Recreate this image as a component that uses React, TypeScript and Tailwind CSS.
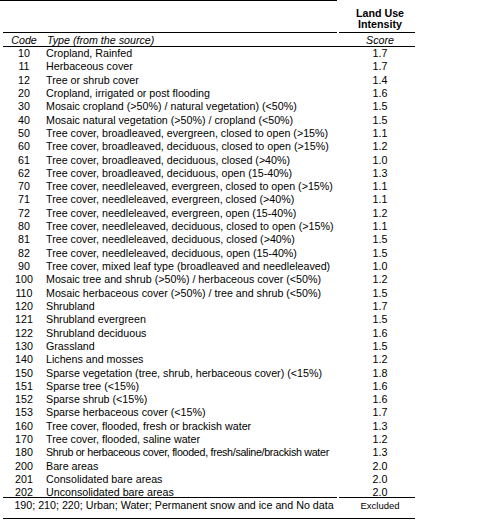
const rows: [string, string, string][] = [
  ["10", "Cropland, Rainfed", "1.7"],
  ["11", "Herbaceous cover", "1.7"],
  ["12", "Tree or shrub cover", "1.4"],
  ["20", "Cropland, irrigated or post flooding", "1.6"],
  ["30", "Mosaic cropland (>50%) / natural vegetation) (<50%)", "1.5"],
  ["40", "Mosaic natural vegetation (>50%) / cropland (<50%)", "1.5"],
  ["50", "Tree cover, broadleaved, evergreen, closed to open (>15%)", "1.1"],
  ["60", "Tree cover, broadleaved, deciduous, closed to open (>15%)", "1.2"],
  ["61", "Tree cover, broadleaved, deciduous, closed (>40%)", "1.0"],
  ["62", "Tree cover, broadleaved, deciduous, open (15-40%)", "1.3"],
  ["70", "Tree cover, needleleaved, evergreen, closed to open (>15%)", "1.1"],
  ["71", "Tree cover, needleleaved, evergreen, closed (>40%)", "1.1"],
  ["72", "Tree cover, needleleaved, evergreen, open (15-40%)", "1.2"],
  ["80", "Tree cover, needleleaved, deciduous, closed to open (>15%)", "1.1"],
  ["81", "Tree cover, needleleaved, deciduous, closed (>40%)", "1.5"],
  ["82", "Tree cover, needleleaved, deciduous, open (15-40%)", "1.5"],
  ["90", "Tree cover, mixed leaf type (broadleaved and needleleaved)", "1.0"],
  ["100", "Mosaic tree and shrub (>50%) / herbaceous cover (<50%)", "1.2"],
  ["110", "Mosaic herbaceous cover (>50%) / tree and shrub (<50%)", "1.5"],
  ["120", "Shrubland", "1.7"],
  ["121", "Shrubland evergreen", "1.5"],
  ["122", "Shrubland deciduous", "1.6"],
  ["130", "Grassland", "1.5"],
  ["140", "Lichens and mosses", "1.2"],
  ["150", "Sparse vegetation (tree, shrub, herbaceous cover) (<15%)", "1.8"],
  ["151", "Sparse tree (<15%)", "1.6"],
  ["152", "Sparse shrub (<15%)", "1.6"],
  ["153", "Sparse herbaceous cover (<15%)", "1.7"],
  ["160", "Tree cover, flooded, fresh or brackish water", "1.3"],
  ["170", "Tree cover, flooded, saline water", "1.2"],
  ["180", "Shrub or herbaceous cover, flooded, fresh/saline/brackish water", "1.3"],
  ["200", "Bare areas", "2.0"],
  ["201", "Consolidated bare areas", "2.0"],
  ["202", "Unconsolidated bare areas", "2.0"],
];

export default function App() {
  return (
    <div className="w-[490px] h-[520px] bg-white text-black text-[10.7px] font-['Liberation_Sans',Arial,sans-serif] overflow-hidden">
      <div className="h-px w-[337px] bg-black" />

      <div className="ml-[3px] w-[412px]">
        {/* title row */}
        <div className="flex h-[32px]">
          <div className="w-[334px] border-b border-black" />
          <div className="w-[76px] ml-[2px] border-b border-black pl-[6px] pt-[7px] text-center font-bold leading-[11px]">
            Land Use
            <br />
            Intensity
          </div>
        </div>

        {/* column heads */}
        <div className="flex h-[14px] border-b border-black italic leading-[13px] pt-[1px]">
          <div className="w-[42px] text-center">Code</div>
          <div className="w-[292px] pl-[2px]">Type (from the source)</div>
          <div className="w-[76px] ml-[2px] pl-[6px] text-center">Score</div>
        </div>

        <div className="h-[450px]">
          {rows.map(([code, type, score]) => (
            <div key={code} className="flex h-[13.32px] leading-[13.32px] whitespace-nowrap">
              <div className="w-[42px] text-center">{code}</div>
              <div
                className={`w-[292px] pl-[1px] ${code === "180" ? "tracking-[-0.3px]" : ""}`}
              >
                {type}
              </div>
              <div className="w-[76px] ml-[2px] pl-[6px] text-center">{score}</div>
            </div>
          ))}
        </div>

        {/* excluded row */}
        <div className="flex">
          <div className="w-[334px] border-t border-black" />
          <div className="w-[76px] ml-[2px] border-t border-black" />
        </div>
        <div className="flex h-[21px] border-b border-black leading-[13px] pt-[1px] whitespace-nowrap">
          <div className="w-[334px] pl-[8px] text-center">
            190; 210; 220; Urban; Water; Permanent snow and ice and No data
          </div>
          <div className="w-[76px] ml-[2px] pl-[6px] text-center text-[9.5px]">Excluded</div>
        </div>
      </div>
    </div>
  );
}
